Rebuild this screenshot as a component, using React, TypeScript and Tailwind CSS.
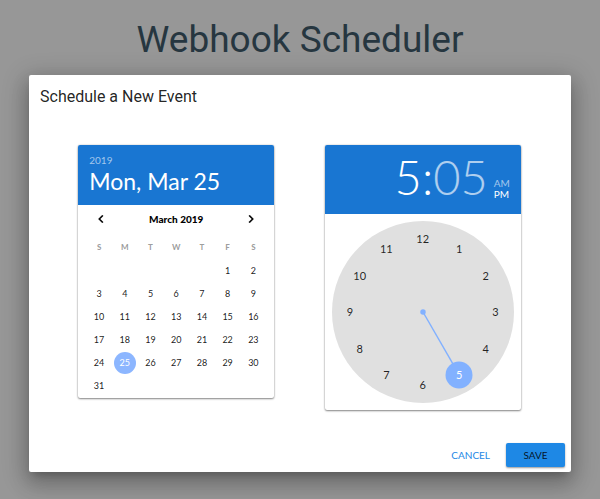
import React from 'react';

const WEEKDAYS = ['S', 'M', 'T', 'W', 'T', 'F', 'S'];
const FIRST_WEEKDAY = 5;
const DAYS_IN_MONTH = 31;
const SELECTED_DAY = 25;
const SELECTED_HOUR = 5;

function chunk<T>(items: T[], size: number): T[][] {
  const rows: T[][] = [];
  for (let i = 0; i < items.length; i += size) rows.push(items.slice(i, i + size));
  return rows;
}

const cells: (number | null)[] = [
  ...Array.from({ length: FIRST_WEEKDAY }, () => null),
  ...Array.from({ length: DAYS_IN_MONTH }, (_, i) => i + 1),
];
while (cells.length % 7 !== 0) cells.push(null);
const weeks = chunk(cells, 7);

function Chevron({ direction }: { direction: 'left' | 'right' }) {
  return (
    <svg viewBox="0 0 24 24" className="size-4" fill="currentColor" aria-hidden="true">
      {direction === 'left' ? (
        <path d="M15.41 7.41 14 6l-6 6 6 6 1.41-1.41L10.83 12z" stroke="currentColor" strokeWidth="0.4" />
      ) : (
        <path d="M10 6 8.59 7.41 13.17 12l-4.58 4.59L10 18l6-6z" stroke="currentColor" strokeWidth="0.4" />
      )}
    </svg>
  );
}

const card =
  'w-[196px] overflow-hidden rounded-xs bg-white shadow-[0_1px_2px_rgba(0,0,0,0.45),0_0_2px_rgba(0,0,0,0.2)]';

function DatePicker() {
  return (
    <section className={card} aria-label="Date">
      <header className="flex h-[60px] flex-col items-start bg-[#1976d2] px-[11px] pt-2 text-white">
        <button type="button" className="text-[10px] leading-[14px] text-white/60">
          2019
        </button>
        <button type="button" className="text-[23px] leading-7">
          Mon, Mar 25
        </button>
      </header>
      <div className="px-2 pb-px">
        <div className="flex h-7 items-center justify-between px-[7px]">
          <button type="button" aria-label="Previous month">
            <Chevron direction="left" />
          </button>
          <button type="button" className="text-[10px] font-black">
            March 2019
          </button>
          <button type="button" aria-label="Next month">
            <Chevron direction="right" />
          </button>
        </div>
        <table className="w-full table-fixed border-collapse text-center text-[9px] leading-3 text-black/90">
          <thead>
            <tr className="h-[26px]">
              {WEEKDAYS.map((d, i) => (
                <th key={i} scope="col" className="px-0 pt-[2px] pb-0 text-[8px] font-black text-black/40">
                  {d}
                </th>
              ))}
            </tr>
          </thead>
          <tbody>
            {weeks.map((week, w) => (
              <tr key={w} className="h-[23px]">
                {week.map((day, i) => (
                  <td key={i} className="p-0">
                    {day !== null && (
                      <button
                        type="button"
                        className={
                          day === SELECTED_DAY
                            ? 'mx-auto flex size-[22px] items-center justify-center rounded-full bg-[#8cb6ff] text-white'
                            : 'mx-auto flex size-[22px] items-center justify-center rounded-full'
                        }
                      >
                        {day}
                      </button>
                    )}
                  </td>
                ))}
              </tr>
            ))}
          </tbody>
        </table>
      </div>
    </section>
  );
}

function TimePicker() {
  const angle = (SELECTED_HOUR * Math.PI) / 6;
  return (
    <section className={card} aria-label="Time">
      <header className="flex h-[69px] items-end justify-end gap-[6px] bg-[#1976d2] pr-[11px] pb-[13px] text-white">
        <div className="flex text-[47px] leading-12 font-light">
          <button type="button">{SELECTED_HOUR}</button>
          <span>:</span>
          <button type="button" className="text-white/65">
            05
          </button>
        </div>
        <div className="flex flex-col items-start pb-px text-[10px] leading-[11px]">
          <button type="button" className="text-white/60">
            AM
          </button>
          <button type="button">PM</button>
        </div>
      </header>
      <div className="p-[7px]">
        <div className="relative aspect-square rounded-full bg-[#e0e0e0]">
          <svg viewBox="-50 -50 100 100" className="size-full" aria-hidden="true">
            <line
              x1="0"
              y1="0"
              x2={40 * Math.sin(angle)}
              y2={-40 * Math.cos(angle)}
              stroke="#82b1ff"
              strokeWidth="0.8"
            />
            <circle r="1.5" fill="#82b1ff" />
          </svg>
          {Array.from({ length: 12 }, (_, i) => i + 1).map((hour) => (
            <button
              key={hour}
              type="button"
              className={
                hour === SELECTED_HOUR
                  ? 'absolute flex size-[27px] -translate-1/2 items-center justify-center rounded-full bg-[#82b1ff] text-[11px] text-white'
                  : 'absolute flex size-[27px] -translate-1/2 items-center justify-center rounded-full text-[11px] text-black/85'
              }
              style={{
                left: `${50 + 40 * Math.sin((hour * Math.PI) / 6)}%`,
                top: `${50 - 40 * Math.cos((hour * Math.PI) / 6)}%`,
              }}
            >
              {hour}
            </button>
          ))}
        </div>
      </div>
    </section>
  );
}

export default function App() {
  return (
    <div className="min-h-screen bg-[#979797] px-[29px] pt-4 pb-[27px] font-['Roboto',sans-serif]">
      <h1 className="text-center text-[37px] leading-12 text-[#263640]">Webhook Scheduler</h1>
      <main
        role="dialog"
        aria-labelledby="dialog-title"
        className="mt-[11px] rounded-xs bg-white shadow-[0_6px_8px_-4px_rgba(0,0,0,0.2),0_12px_20px_2px_rgba(0,0,0,0.14),0_5px_24px_4px_rgba(0,0,0,0.2)]"
      >
        <h2 id="dialog-title" className="px-[11px] pt-[10px] text-base leading-6 text-black/87">
          Schedule a New Event
        </h2>
        <div className="grid grid-cols-2 items-start justify-items-center pt-9 pr-[25px] pb-[33px] pl-6 font-['Lato',sans-serif]">
          <DatePicker />
          <TimePicker />
        </div>
        <footer className="flex justify-end gap-4 px-[6px] pb-[5px] font-['Lato',sans-serif] text-[10px]">
          <button type="button" className="text-[#1e88e5]">
            CANCEL
          </button>
          <button
            type="button"
            className="h-6 w-[59px] rounded-xs bg-[#1e88e5] text-black/85 shadow-[0_1px_2px_rgba(0,0,0,0.4)]"
          >
            SAVE
          </button>
        </footer>
      </main>
    </div>
  );
}
